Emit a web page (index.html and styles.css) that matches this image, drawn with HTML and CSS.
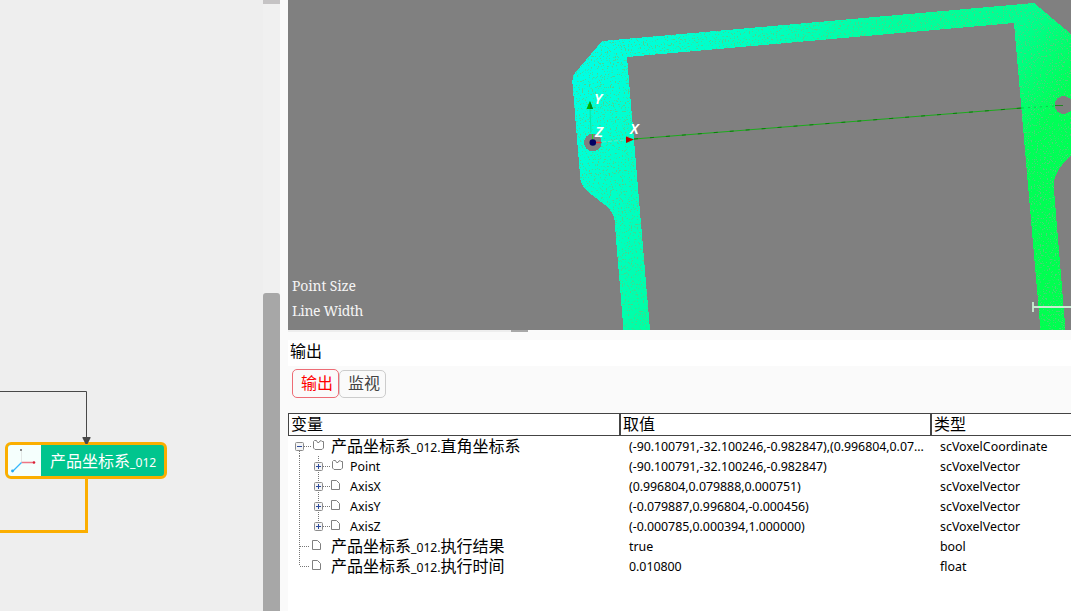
FILE: index.html
```html
<!DOCTYPE html>
<html lang="zh">
<head>
<meta charset="utf-8">
<title>输出</title>
<link rel="stylesheet" href="styles.css">
</head>
<body>
<svg class="defs" width="0" height="0">
  <symbol id="box" viewBox="0 0 9 9"><rect x=".5" y=".5" width="8" height="8" rx="1" fill="#f4f4f4" stroke="#8c8c8c"/><path d="M2 4.500h5" stroke="#2c4a9c"/></symbol>
  <symbol id="plus" viewBox="0 0 9 9"><use href="#box" width="9" height="9"/><path d="M4.500 2v5" stroke="#2c4a9c"/></symbol>
  <symbol id="folder" viewBox="0 0 11 10"><path d="M.5 1.500L1.500 .5H3.500L4.500 2.500H6L7 .8H8.500L9 1.500H10.500V8L9 9.500H2L.5 8Z" fill="#fff" stroke="#808080"/></symbol>
  <symbol id="page" viewBox="0 0 9 10"><path d="M.5 .5H5.500L8.500 3.500V9.500H.5Z" fill="#fff" stroke="#808080"/></symbol>
</svg>
<main class="app">
  <section class="flow">
    <svg class="edges" width="263" height="611">
      <path d="M0 391.500H86.500V438" fill="none" stroke="#484848"/>
      <path d="M0 531.500H86.500V477" fill="none" stroke="#fbae00" stroke-width="3"/>
    </svg>
    <div class="node">
      <svg class="axes" width="34" height="31">
        <path d="M13.500 5V17" stroke="#e4e9e7"/><path d="M13.500 17.500H26" stroke="#ef7584" stroke-width="1.500"/><path d="M13.500 17.500L5 26" stroke="#36b7fa" stroke-width="1.300"/>
        <rect x="12" y="4" width="2" height="2" fill="#888"/><circle cx="26" cy="17.500" r="1.300" fill="#d91f36"/><circle cx="4.500" cy="26" r="1.400" fill="#20a8f4"/>
      </svg>
      <span class="node-name">产品坐标系<small>_012</small></span>
    </div>
    <svg class="arrow" width="9" height="8"><path d="M.5 0H8.500V1L5.500 7H3.500L.5 1Z" fill="#484848"/></svg>
  </section>
  <div class="scroll"><div class="stub"></div><div class="track"></div><div class="thumb"></div></div>
  <section class="side">
    <svg class="view" width="783" height="330" viewBox="288 0 783 330">
      <defs>
        <linearGradient id="depth" gradientUnits="userSpaceOnUse" x1="590" y1="60" x2="990" y2="360">
          <stop offset="0" stop-color="#00ffe4"/><stop offset=".12" stop-color="#00ffd2"/><stop offset=".3" stop-color="#00ffb8"/><stop offset=".43" stop-color="#00ffa0"/><stop offset=".65" stop-color="#00ff90"/><stop offset=".8" stop-color="#00ff58"/><stop offset="1" stop-color="#00ff50"/>
        </linearGradient>
        <filter id="grain" x="0" y="0" width="100%" height="100%" color-interpolation-filters="sRGB">
          <feTurbulence type="fractalNoise" baseFrequency=".67 .71" numOctaves="2" seed="9"/>
          <feColorMatrix values="0 0 0 0 .38  0 0 0 0 .78  0 0 0 0 .5  12 0 0 0 -7.300"/>
          <feComposite in2="SourceGraphic" operator="in"/>
        </filter>
        <path id="part" fill-rule="evenodd" d="M602 41L1034 3L1071 34V155Q1056 169 1054 181V190L1065.500 330H1040.500L1014 23L627 57L650 330H623.500L614.500 220Q614 212 605 205L587 191Q580 184 580 175L572.500 84Q572 76 575 73ZM584 142.500a8.800 8.800 0 1 0 17.600 0a8.800 8.800 0 1 0-17.600 0ZM1054.500 105a9 9 0 1 0 18 0a9 9 0 1 0-18 0Z"/>
      </defs>
      <rect x="288" width="783" height="330" fill="#808080"/>
      <use href="#part" fill="url(#depth)" shape-rendering="crispEdges"/>
      <use href="#part" filter="url(#grain)" opacity=".8"/>
      <path d="M634 139L1022 108" stroke="#10b010" stroke-width=".9"/><path d="M634 139L1022 108" stroke="#087e08" stroke-dasharray="4 12"/>
      <path d="M1022 108L1054 106" stroke="#10c850" stroke-dasharray="2 4"/><path d="M1055 105.500H1063" stroke="#208820"/>
      <path d="M592.500 141V134" stroke="#26d820"/><path d="M591 132L590 109" stroke="#0de6a3"/>
      <path d="M595 142.500H601" stroke="#e83838" stroke-width="1.500"/><path d="M602 142L626 140" stroke="#63e7c2" stroke-dasharray="4 2"/>
      <circle cx="592.800" cy="142.500" r="3.300" fill="#000064"/>
      <path d="M589.800 101L586.500 109H593Z" fill="#00b500"/><path d="M590 101L593 109H590Z" fill="#008a20"/>
      <path d="M626 136.500L634 139.500L626 143Z" fill="#bb0000"/>
      <g class="axis-label"><text x="594" y="104">Y</text><text x="595" y="136.500">Z</text><text x="630" y="133.500">X</text></g>
      <path d="M1033 302V312M1033 307H1071" stroke="#c9edd2" stroke-width="1.800"/>
      <g class="overlay"><text x="292" y="291" textLength="64">Point Size</text><text x="292" y="316" textLength="71.500">Line Width</text></g>
    </svg>
    <div class="splitter"><i></i></div>
    <h1 class="title">输出</h1>
    <nav class="tabs"><span class="tab active">输出</span><span class="tab">监视</span></nav>
    <div class="table">
      <div class="row head"><span>变量</span><span>取值</span><span>类型</span></div>
      <div class="row"><div class="name"><svg class="tree" width="43" height="20"><path class="dots" d="M11.500 15V20M16 10.500H23"/><use href="#box" x="7" y="6" width="9" height="9"/><use href="#folder" x="25" y="4" width="11" height="10"/></svg><b>产品坐标系<small>_012.</small>直角坐标系</b></div><span>(-90.100791,-32.100246,-0.982847),(0.996804,0.07...</span><span>scVoxelCoordinate</span></div>
      <div class="row"><div class="name"><svg class="tree" width="62" height="20"><path class="dots" d="M11.500 0V20M30.500 0V20M35 10.500H42"/><use href="#plus" x="26" y="6" width="9" height="9"/><use href="#folder" x="44" y="4" width="11" height="10"/></svg>Point</div><span>(-90.100791,-32.100246,-0.982847)</span><span>scVoxelVector</span></div>
      <div class="row"><div class="name"><svg class="tree" width="62" height="20"><path class="dots" d="M11.500 0V20M30.500 0V20M35 10.500H42"/><use href="#plus" x="26" y="6" width="9" height="9"/><use href="#page" x="43" y="4" width="9" height="10"/></svg>AxisX</div><span>(0.996804,0.079888,0.000751)</span><span>scVoxelVector</span></div>
      <div class="row"><div class="name"><svg class="tree" width="62" height="20"><path class="dots" d="M11.500 0V20M30.500 0V20M35 10.500H42"/><use href="#plus" x="26" y="6" width="9" height="9"/><use href="#page" x="43" y="4" width="9" height="10"/></svg>AxisY</div><span>(-0.079887,0.996804,-0.000456)</span><span>scVoxelVector</span></div>
      <div class="row"><div class="name"><svg class="tree" width="62" height="20"><path class="dots" d="M11.500 0V20M30.500 0V10M35 10.500H42"/><use href="#plus" x="26" y="6" width="9" height="9"/><use href="#page" x="43" y="4" width="9" height="10"/></svg>AxisZ</div><span>(-0.000785,0.000394,1.000000)</span><span>scVoxelVector</span></div>
      <div class="row"><div class="name"><svg class="tree" width="43" height="20"><path class="dots" d="M11.500 0V20M12 10.500H22"/><use href="#page" x="24" y="4" width="9" height="10"/></svg><b>产品坐标系<small>_012.</small>执行结果</b></div><span>true</span><span>bool</span></div>
      <div class="row"><div class="name"><svg class="tree" width="43" height="20"><path class="dots" d="M11.500 0V10M12 10.500H22"/><use href="#page" x="24" y="4" width="9" height="10"/></svg><b>产品坐标系<small>_012.</small>执行时间</b></div><span>0.010800</span><span>float</span></div>
    </div>
  </section>
</main>
</body>
</html>
```
FILE: styles.css
```css
* { box-sizing: border-box; }
body { margin: 0; overflow: hidden; font-family: "Noto Sans", "Noto Sans CJK SC", sans-serif; color: #000; }
.defs { position: absolute; }
.app { display: grid; grid-template-columns: 263px 17px 8px 783px; height: 611px; background: #fafafa; }
.flow { position: relative; background: #eee; }
.edges { display: block; }
.node { position: absolute; left: 5px; top: 442px; width: 162px; height: 37px; display: flex; border: 3px solid #fbae00; border-radius: 6px; background: #00c58e; overflow: hidden; }
.axes { flex: none; width: 33px; background: #f5fffd; }
.node-name { flex: 1; padding-left: 9px; font: 16px/31px "Noto Sans CJK SC", sans-serif; color: #fff; white-space: nowrap; }
.node-name small { font: 12.2px "Noto Sans", sans-serif; }
.arrow { position: absolute; left: 82px; top: 437px; }
.scroll { display: flex; flex-direction: column; background: #f0f0f0; }
.stub { height: 4px; background: #c5c3c4; }
.track { height: 289px; }
.thumb { flex: 1; border-radius: 3px 3px 0 0; background: #a7a7a7; }
.side { grid-column: 4; display: flex; flex-direction: column; background: #fff; }
.view { display: block; flex: none; }
.axis-label { font: italic 600 15px "Noto Sans", sans-serif; fill: #fff; }
.overlay { font: 14px "Noto Serif", "Liberation Serif", serif; fill: #f4f4f4; }
.splitter { height: 10px; padding-left: 223px; background: linear-gradient(#eee, #eee) 0 0 / 223px 2px no-repeat #fafafa; }
.splitter i { display: block; width: 17px; height: 2px; background: #a8a8a8; }
.title { margin: 0; height: 26px; padding-left: 2px; font: 16px/21px "Noto Sans CJK SC", sans-serif; }
.tabs { display: flex; height: 47px; padding: 3px 4px; background: #fafafa; }
.tab { width: 47px; height: 29px; padding-left: 8px; border: 1px solid #ed6c75; border-radius: 5px; font: 16px/25px "Noto Sans CJK SC", sans-serif; white-space: nowrap; color: #444; }
.tab:not(.active) { margin-top: 1px; height: 28px; line-height: 23px; border-color: #ccc; }
.tab.active { color: #f00; }
.row { display: grid; grid-template-columns: 341px 311px 131px; height: 20px; font-size: 12.4px; line-height: 22px; white-space: nowrap; }
.row.head { grid-template-columns: 332px 311px 140px; height: 23px; border: solid #444; border-width: 1px 0 1px 1px; font: 16px/18px "Noto Sans CJK SC", sans-serif; }
.head span { padding-left: 2px; height: 21px; }
.head span + span { border-left: 2px solid #444; margin-left: -2px; }
.name { display: flex; }
.name + span { letter-spacing: -.04px; }
.name b { font: 16px/18px "Noto Sans CJK SC", sans-serif; }
.name small { font: 12.2px/17px "Noto Sans", sans-serif; }
.tree { flex: none; }
.dots { fill: none; stroke: #777; stroke-dasharray: 1 1; }
```
